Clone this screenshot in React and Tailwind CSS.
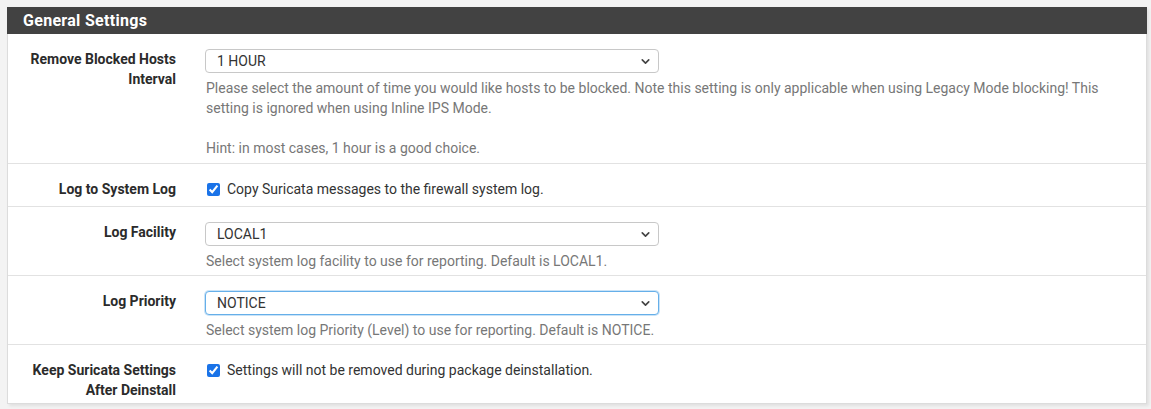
import { ChevronDown } from 'lucide-react'

const FakeSelect = ({ value, focused }) => (
  <div
    className={
      'flex items-center justify-between w-[454px] h-[24px] rounded-[4px] bg-white pl-[11px] pr-[6px] text-[14px] text-[#333] ' +
      (focused
        ? 'border border-[#66afe9] shadow-[0_0_0_1px_rgba(102,175,233,0.35)]'
        : 'border border-[#c8c8c8]')
    }
  >
    <span>{value}</span>
    <ChevronDown size={13} strokeWidth={3} className="text-[#444]" />
  </div>
)

const Check = ({ text }) => (
  <div className="flex items-center h-[20px] text-[14px] text-[#333]">
    <input type="checkbox" checked readOnly className="w-[13px] h-[13px] ml-[2px] mr-[7px] accent-[#1a73e8]" />
    <span>{text}</span>
  </div>
)

const Row = ({ label, children, pb = 'pb-[4px]', last }) => (
  <div className={'flex pt-[15px] ' + pb + (last ? '' : ' border-b border-[#e2e2e2]')}>
    <div className="w-[182px] pr-[14px] text-right font-bold text-[14px] leading-[20px] text-[#2b2b2b]">
      {label}
    </div>
    <div className="flex-1 pl-[15px]">{children}</div>
  </div>
)

const Help = ({ children }) => (
  <div className="mt-[5px] pl-px text-[14px] leading-[20px] text-[#777]">{children}</div>
)

export default function App() {
  return (
    <div className="min-h-[409px] bg-[#f3f3f3] pt-[7px] px-[7px]" style={{ fontFamily: 'Roboto, "Liberation Sans", sans-serif' }}>
      <div className="w-[1140px] bg-white border-x border-b border-[#dcdcdc] shadow-[2px_2px_3px_rgba(0,0,0,0.08)]">
        {/* Panel heading */}
        <div className="h-[27px] -mx-px bg-[#424242] pl-[16px] flex items-center text-white font-bold text-[16px] tracking-[0.3px]">
          General Settings
        </div>

        <Row label={<>Remove Blocked Hosts<br />Interval</>} pb="pb-[5px]">
          <FakeSelect value="1 HOUR" />
          <Help>
            Please select the amount of time you would like hosts to be blocked. Note this setting is only applicable when using Legacy Mode blocking! This
            <br />
            setting is ignored when using Inline IPS Mode.
            <br />
            <br />
            Hint: in most cases, 1 hour is a good choice.
          </Help>
        </Row>

        <Row label="Log to System Log" pb="pb-[7px]">
          <Check text="Copy Suricata messages to the firewall system log." />
        </Row>

        <Row label="Log Facility">
          <FakeSelect value="LOCAL1" />
          <Help>Select system log facility to use for reporting. Default is LOCAL1.</Help>
        </Row>

        <Row label="Log Priority">
          <FakeSelect value="NOTICE" focused />
          <Help>Select system log Priority (Level) to use for reporting. Default is NOTICE.</Help>
        </Row>

        <Row label={<>Keep Suricata Settings<br />After Deinstall</>} pb="pb-[3px]" last>
          <Check text="Settings will not be removed during package deinstallation." />
        </Row>
      </div>
    </div>
  )
}
